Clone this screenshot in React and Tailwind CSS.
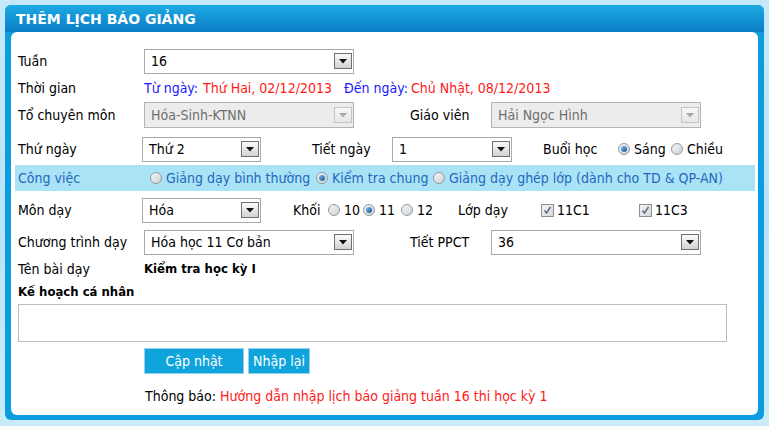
import React from "react";

const FONT = { fontFamily: '"DejaVu Sans Condensed", "DejaVu Sans", Tahoma, sans-serif' };

function Arrow({ disabled }) {
  return (
    <div
      className={
        "flex h-[16px] w-[18px] items-center justify-center border " +
        (disabled
          ? "border-[#c4c4c4] bg-gradient-to-b from-[#f7f7f7] to-[#e6e6e6]"
          : "border-[#707070] bg-gradient-to-b from-[#fbfbfb] to-[#d2d2d2]")
      }
    >
      <svg width="8" height="5" viewBox="0 0 8 5">
        <polygon points="0,0 8,0 4,4.5" fill={disabled ? "#a8a8a8" : "#111"} />
      </svg>
    </div>
  );
}

function Select({ value, w, disabled, h = "h-[25px]" }) {
  return (
    <div
      className={
        "flex shrink-0 items-center justify-between border pl-[6px] pr-[1px] " +
        h +
        " " +
        w +
        (disabled ? " border-[#b4b4b4] bg-[#ececec] text-[#6f6f6f]" : " border-[#a9a9a9] bg-white text-black")
      }
    >
      <span>{value}</span>
      <Arrow disabled={disabled} />
    </div>
  );
}

function Radio({ checked }) {
  return (
    <span className="inline-flex h-[12px] w-[12px] shrink-0 items-center justify-center rounded-full border border-[#8f9aa3] bg-gradient-to-br from-[#f4f4f4] to-[#cfd3d6]">
      {checked && <span className="h-[6px] w-[6px] rounded-full bg-gradient-to-br from-[#7fc3f0] to-[#15508f]" />}
    </span>
  );
}

function Check() {
  return (
    <span className="inline-flex h-[13px] w-[13px] shrink-0 items-center justify-center border border-[#8e8f8f] bg-gradient-to-br from-[#f2f2f2] to-[#d8d8d8]">
      <svg width="9" height="9" viewBox="0 0 9 9">
        <path d="M1.5 4.5 L3.5 7 L7.5 1" fill="none" stroke="#5a6d8e" strokeWidth="1.5" />
      </svg>
    </span>
  );
}

function RadioLabel({ checked, children, w }) {
  return (
    <div className={"flex shrink-0 items-center gap-[4px] " + (w || "")}>
      <Radio checked={checked} />
      <span className="whitespace-nowrap">{children}</span>
    </div>
  );
}

export default function App() {
  return (
    <div
      className="h-[426px] w-[769px] overflow-hidden bg-gradient-to-b from-[#c6e9f9] via-[#b9e3f7] to-[#c9ebfa] pl-[5px] pt-[5px] text-[14px] text-black"
      style={FONT}
    >
      <div className="flex h-[415px] w-[759px] flex-col rounded-[6px] bg-[#0b9de0]">
        <div
          className="flex h-[27px] items-center rounded-t-[6px] bg-gradient-to-b from-[#1eaae4] to-[#0a7dc5] pl-[11px] pt-[1px] text-[14px] font-bold text-white"
          style={{ fontFamily: '"DejaVu Sans", Tahoma, sans-serif' }}
        >
          THÊM LỊCH BÁO GIẢNG
        </div>
        <div className="mx-[6px] mb-[5px] flex flex-1 flex-col rounded-[6px] bg-white pl-[7px] pt-[15px]">
          {/* Tuần */}
          <div className="flex h-[28px] items-center">
            <div className="w-[126px] shrink-0">Tuần</div>
            <Select value="16" w="w-[210px]" />
          </div>
          {/* Thời gian */}
          <div className="flex h-[26px] items-center whitespace-nowrap">
            <div className="w-[126px] shrink-0">Thời gian</div>
            <span className="w-[59px] shrink-0 text-[#1a1aff]">Từ ngày:</span>
            <span className="w-[141px] shrink-0 text-[#ff1a1a]">Thứ Hai, 02/12/2013</span>
            <span className="w-[67px] shrink-0 text-[#1a1aff]">Đến ngày:</span>
            <span className="text-[#ff1a1a]">Chủ Nhật, 08/12/2013</span>
          </div>
          {/* Tổ chuyên môn */}
          <div className="flex h-[28px] items-center">
            <div className="w-[126px] shrink-0">Tổ chuyên môn</div>
            <Select value="Hóa-Sinh-KTNN" w="w-[210px]" disabled h="h-[26px]" />
            <div className="ml-[56px] w-[81px] shrink-0">Giáo viên</div>
            <Select value="Hải Ngọc Hình" w="w-[210px]" disabled h="h-[26px]" />
          </div>
          {/* Thứ ngày */}
          <div className="flex h-[36px] items-center pt-[4px]">
            <div className="w-[124px] shrink-0">Thứ ngày</div>
            <Select value="Thứ 2" w="w-[119px]" />
            <div className="ml-[51px] w-[80px] shrink-0">Tiết ngày</div>
            <Select value="1" w="w-[120px]" />
            <div className="ml-[31px] w-[75px] shrink-0">Buổi học</div>
            <RadioLabel checked w="w-[53px]">Sáng</RadioLabel>
            <RadioLabel>Chiều</RadioLabel>
          </div>
          {/* Công việc */}
          <div className="-ml-[3px] flex h-[26px] w-[740px] items-center bg-[#aae3f6] pl-[3px] text-[#2468be]">
            <div className="w-[132px] shrink-0">Công việc</div>
            <RadioLabel w="w-[166px]">Giảng dạy bình thường</RadioLabel>
            <RadioLabel checked w="w-[117px]">Kiểm tra chung</RadioLabel>
            <RadioLabel>Giảng dạy ghép lớp (dành cho TD &amp; QP-AN)</RadioLabel>
          </div>
          {/* Môn dạy */}
          <div className="flex h-[36px] items-center pt-[2px]">
            <div className="w-[124px] shrink-0">Môn dạy</div>
            <Select value="Hóa" w="w-[119px]" />
            <div className="ml-[32px] w-[35px] shrink-0">Khối</div>
            <RadioLabel w="w-[35px]">10</RadioLabel>
            <RadioLabel checked w="w-[38px]">11</RadioLabel>
            <RadioLabel w="w-[57px]">12</RadioLabel>
            <div className="w-[83px] shrink-0">Lớp dạy</div>
            <div className="flex w-[98px] shrink-0 items-center gap-[3px]">
              <Check />
              <span>11C1</span>
            </div>
            <div className="flex items-center gap-[3px]">
              <Check />
              <span>11C3</span>
            </div>
          </div>
          {/* Chương trình dạy */}
          <div className="flex h-[30px] items-center">
            <div className="w-[126px] shrink-0">Chương trình dạy</div>
            <Select value="Hóa học 11 Cơ bản" w="w-[210px]" />
            <div className="ml-[56px] w-[81px] shrink-0">Tiết PPCT</div>
            <Select value="36" w="w-[210px]" />
          </div>
          {/* Tên bài dạy */}
          <div className="flex h-[24px] items-center">
            <div className="w-[126px] shrink-0">Tên bài dạy</div>
            <span className="text-[13px] font-bold">Kiểm tra học kỳ I</span>
          </div>
          <div className="flex h-[22px] items-center text-[13px] font-bold">Kế hoạch cá nhân</div>
          <div className="mt-[1px] h-[38px] w-[709px] border border-[#bdbdbd]" />
          <div className="ml-[126px] mt-[6px] flex h-[26px] gap-[4px]">
            <div className="flex w-[100px] items-center justify-center border border-[#8fd1ee] bg-[#10a4dc] text-white">Cập nhật</div>
            <div className="flex w-[62px] items-center justify-center border border-[#8fd1ee] bg-[#10a4dc] text-white">Nhập lại</div>
          </div>
          <div className="ml-[127px] mt-[10px] flex h-[24px] items-center">
            <span>Thông báo:</span>
            <span className="ml-[4px] text-[#ff1a1a]">Hướng dẫn nhập lịch báo giảng tuần 16 thi học kỳ 1</span>
          </div>
        </div>
      </div>
    </div>
  );
}
